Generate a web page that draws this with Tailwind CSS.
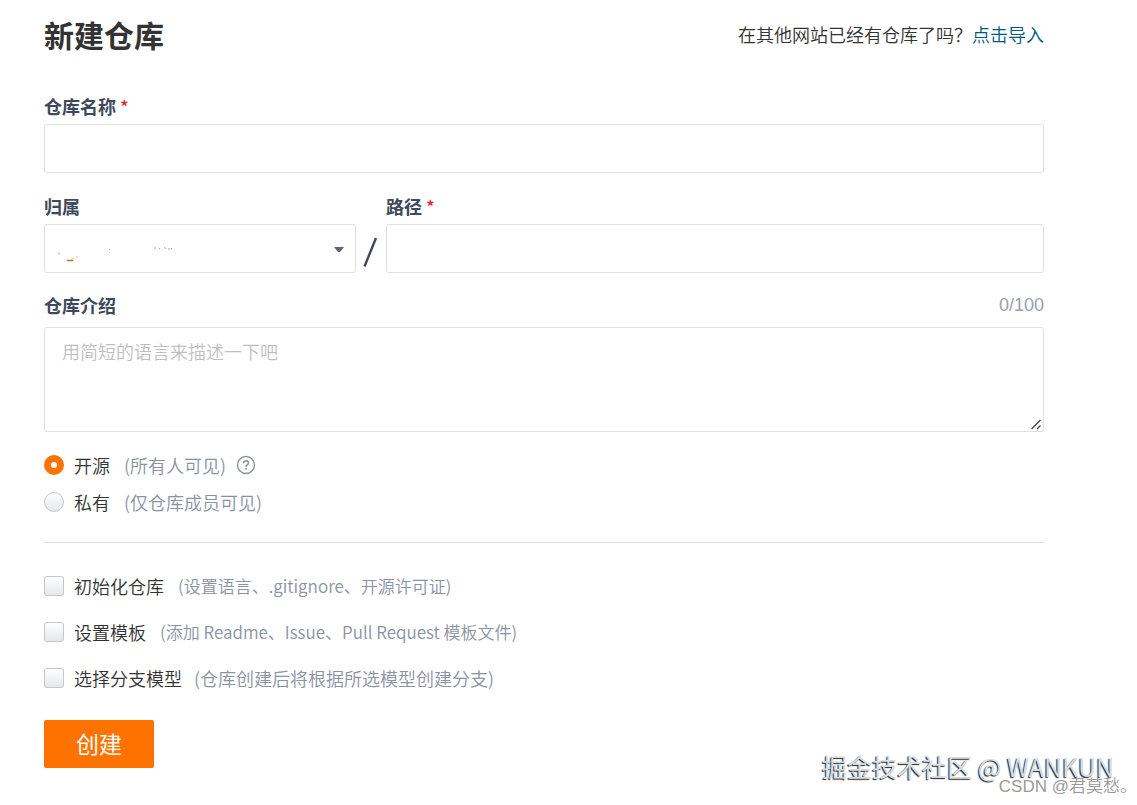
<!DOCTYPE html>
<html lang="zh-CN">
<head>
<meta charset="utf-8">
<meta name="viewport" content="width=device-width, initial-scale=1">
<title>新建仓库</title>
<script src="https://cdn.jsdelivr.net/npm/@tailwindcss/browser@4"></script>
</head>
<body class="relative min-h-screen bg-white font-['Noto_Sans_CJK_SC',sans-serif] text-[18px] leading-6 text-[#333]">
<main class="pt-3.5 pl-11 pr-[93px] pb-9">
  <header class="flex items-center justify-between">
    <h1 class="text-[30px] leading-10 font-bold">新建仓库</h1>
    <p class="flex font-[350]"><span>在其他网站已经有仓库了吗？</span><a href="#" class="text-[#005980]">点击导入</a></p>
  </header>

  <form>
    <div class="mt-10">
      <label for="name" class="block h-[30px] font-bold text-[#40485b]">仓库名称 <span class="font-medium text-[#db2828]">*</span></label>
      <input id="name" type="text" class="block h-[49px] w-full rounded-[3px] border border-[#dfe0e1] px-4 outline-none">
    </div>

    <div class="mt-[21px] flex">
      <div class="w-[312px]">
        <label for="owner" class="block h-[30px] font-bold text-[#40485b]">归属</label>
        <div class="relative">
          <select id="owner" class="block h-[49px] w-full appearance-none rounded-[3px] border border-[#dfe0e1] bg-white px-4 outline-none"><option></option></select>
          <svg class="pointer-events-none absolute top-5 left-3" width="120" height="20" viewBox="0 0 120 20" fill="none" aria-hidden="true">
            <path d="M2 9l2 1M53 5.500h1M98 4h2M103 4.500h1M108 3.500l2 1M112 5h2M115 4.500h1" stroke="#aaa"/>
            <path d="M11 16.500h6" stroke="#c87920" stroke-width="1.500"/><path d="M15 15.500l3-1M20 13h2" stroke="#e9bd83"/>
          </svg>
          <svg class="pointer-events-none absolute top-[23px] right-3" width="10" height="6" viewBox="0 0 10 6" aria-hidden="true"><path d="M0 0h10L6 5H4z" fill="#5f6572"/></svg>
        </div>
      </div>
      <div class="flex w-[30px] items-end justify-center pr-0.5 pb-[5px]" aria-hidden="true">
        <svg width="16" height="32" viewBox="0 0 16 32"><path d="M2.500 30.500L14 2" stroke="#40485b" stroke-width="2.400"/></svg>
      </div>
      <div class="flex-1">
        <label for="path" class="block h-[30px] font-bold text-[#40485b]">路径 <span class="font-medium text-[#db2828]">*</span></label>
        <input id="path" type="text" class="block h-[49px] w-full rounded-[3px] border border-[#dfe0e1] px-4 outline-none">
      </div>
    </div>

    <div class="mt-5">
      <div class="flex h-[34px] justify-between">
        <label for="desc" class="font-bold text-[#40485b]">仓库介绍</label>
        <span class="font-['Liberation_Sans',sans-serif] text-[18px] text-[#9a9fac]">0/100</span>
      </div>
      <div class="relative">
        <textarea id="desc" placeholder="用简短的语言来描述一下吧" class="block h-[105px] w-full resize-none rounded-[3px] border border-[#dfe0e1] px-[17px] py-[11px] font-[350] outline-none placeholder:text-[#bfbfbf]"></textarea>
        <svg class="pointer-events-none absolute right-0.5 bottom-0.5" width="12" height="11" viewBox="0 0 12 11" stroke="#444" stroke-width="1.300" aria-hidden="true"><path d="M1.500 10L10.500 1M7 10l3.500-3.500"/></svg>
      </div>
    </div>

    <fieldset class="mt-[21px] grid gap-[13px] font-[350]">
      <div class="flex items-center">
        <input id="open" name="visibility" type="radio" checked class="size-5 appearance-none rounded-full border border-[#c4c6ca] bg-linear-to-b from-white to-[#e5e7ea] checked:border-[7px] checked:border-[#fe7300] checked:bg-none">
        <label for="open" class="ml-2.5">开源</label>
        <span class="ml-3.5 text-[#8c92a4]">(所有人可见)</span>
        <svg class="ml-2.5" width="20" height="20" viewBox="0 0 20 20" fill="none" stroke="#8c92a4" stroke-width="1.400" aria-hidden="true"><circle cx="10" cy="10" r="8.500"/><path d="M7.500 8.200c0-3 5-3 5-.2 0 1.900-2.500 1.900-2.500 3.800M10 13v1.700" stroke-width="1.600"/></svg>
      </div>
      <div class="flex items-center">
        <input id="private" name="visibility" type="radio" class="size-5 appearance-none rounded-full border border-[#c4c6ca] bg-linear-to-b from-white to-[#e5e7ea] checked:border-[7px] checked:border-[#fe7300] checked:bg-none">
        <label for="private" class="ml-2.5">私有</label>
        <span class="ml-3.5 text-[#8c92a4]">(仅仓库成员可见)</span>
      </div>
    </fieldset>

    <hr class="mt-7 border-[#dfe0e1]">

    <fieldset class="mt-[31px] grid gap-[22px] font-[350]">
      <div class="flex items-center">
        <input id="init" type="checkbox" class="size-5 appearance-none rounded-[3px] border border-[#c4c6ca] bg-linear-to-b from-white to-[#e5e7ea]">
        <label for="init" class="ml-2.5">初始化仓库</label>
        <span class="ml-3.5 text-[17px] text-[#8c92a4]">(设置语言、.gitignore、开源许可证)</span>
      </div>
      <div class="flex items-center">
        <input id="template" type="checkbox" class="size-5 appearance-none rounded-[3px] border border-[#c4c6ca] bg-linear-to-b from-white to-[#e5e7ea]">
        <label for="template" class="ml-2.5">设置模板</label>
        <span class="ml-3.5 text-[17px] text-[#8c92a4]">(添加 Readme、Issue、Pull Request 模板文件)</span>
      </div>
      <div class="flex items-center">
        <input id="branch" type="checkbox" class="size-5 appearance-none rounded-[3px] border border-[#c4c6ca] bg-linear-to-b from-white to-[#e5e7ea]">
        <label for="branch" class="ml-2.5">选择分支模型</label>
        <span class="ml-3 text-[#8c92a4]">(仓库创建后将根据所选模型创建分支)</span>
      </div>
    </fieldset>

    <button type="submit" class="mt-[30px] block h-12 w-[110px] rounded-[2px] bg-[#fe7300] pb-0.5 text-[23px] text-white">创建</button>
  </form>
</main>
<div class="pointer-events-none absolute right-[23px] bottom-[23px] text-[25px] leading-8 text-[#dcdcdc] [text-shadow:-1px_1px_1px_#222]">掘金技术社区 @ WANKUN</div>
<div class="pointer-events-none absolute right-0 bottom-1.5 text-[17px] leading-6 font-[350] text-[#999] font-['Liberation_Sans','Noto_Sans_CJK_SC',sans-serif]">CSDN @君莫愁。</div>
</body>
</html>
